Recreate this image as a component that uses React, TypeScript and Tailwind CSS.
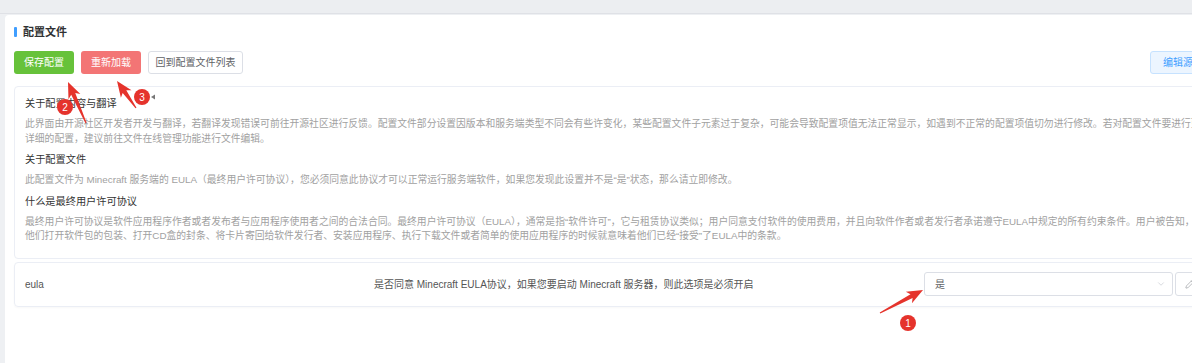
import React from 'react';
import { ChevronDown, Pencil } from 'lucide-react';

const font = { fontFamily: '"Liberation Sans", "Noto Sans CJK SC", sans-serif' };

// tapered annotation arrow, tail -> tip
const arrowPoints = (tx: number, ty: number, px: number, py: number) => {
  const len = Math.hypot(px - tx, py - ty);
  const dx = (px - tx) / len;
  const dy = (py - ty) / len;
  const nx = -dy;
  const ny = dx;
  const bx = px - dx * 13;
  const by = py - dy * 13;
  const wx = px - dx * 16;
  const wy = py - dy * 16;
  const pts = [
    [tx + nx * 0.6, ty + ny * 0.6],
    [bx + nx * 2.2, by + ny * 2.2],
    [wx + nx * 6.5, wy + ny * 6.5],
    [px, py],
    [wx - nx * 6.5, wy - ny * 6.5],
    [bx - nx * 2.2, by - ny * 2.2],
    [tx - nx * 0.6, ty - ny * 0.6],
  ];
  return pts.map(p => p.join(',')).join(' ');
};

const Badge: React.FC<{ x: number; y: number; n: string }> = ({ x, y, n }) => (
  <g>
    <circle cx={x} cy={y} r={8} fill="#e5332c" />
    <text x={x} y={y + 3.5} textAnchor="middle" fontSize="10" fill="#fff" fontFamily="Liberation Sans, sans-serif">
      {n}
    </text>
  </g>
);

const Heading: React.FC<{ children: React.ReactNode; className?: string }> = ({ children, className }) => (
  <div className={`text-[10.2px] leading-[14px] text-[#333] mb-[6px] ${className ?? ''}`}>{children}</div>
);

const Para: React.FC<{ lines: string[]; className?: string }> = ({ lines, className }) => (
  <div className={`text-[9.8px] leading-[14.5px] text-[#a1a1a1] ${className ?? ''}`}>
    {lines.map((l, i) => (
      <div key={i} className="whitespace-nowrap">{l}</div>
    ))}
  </div>
);

export default function App() {
  return (
    <div className="relative w-[1192px] h-[363px] overflow-hidden bg-[#eef0f3]" style={font}>
      <div className="h-[14px] bg-[#eceef1] border-b border-[#dfe1e6]" />
      <div className="ml-[5px] mt-[1px] w-[1240px] h-[400px] bg-white rounded-tl-[4px] pl-[9px] pt-[11px]">
        {/* title */}
        <div className="flex items-center h-[12px]">
          <div className="w-[3px] h-[10px] rounded-[1px] bg-[#409eff]" />
          <div className="ml-[6px] text-[11px] font-bold text-[#303133] leading-[12px]">配置文件</div>
        </div>

        {/* toolbar */}
        <div className="mt-[13px] flex items-center w-[1206px]">
          <button className="h-[23px] w-[60px] rounded-[3px] bg-[#67c23a] text-white text-[10px]">保存配置</button>
          <button className="ml-[7px] h-[23px] w-[60px] rounded-[3px] bg-[#f37575] text-white text-[10px]">重新加载</button>
          <button className="ml-[7px] h-[23px] w-[95px] rounded-[3px] bg-white border border-[#dcdfe6] text-[#606266] text-[10px]">
            回到配置文件列表
          </button>
          <div className="flex-1" />
          <button className="h-[23px] w-[70px] rounded-[3px] bg-[#ecf5ff] border border-[#c6e2ff] text-[#409eff] text-[10px] text-left pl-[12px]">
            编辑源文件
          </button>
        </div>

        {/* info box */}
        <div className="mt-[12px] border border-[#ebeef5] rounded-[4px] pl-[10px] pt-[10px] pb-[14px]">
          <Heading>关于配置内容与翻译</Heading>
          <Para
            className="mb-[7px]"
            lines={[
              '此界面由开源社区开发者开发与翻译，若翻译发现错误可前往开源社区进行反馈。配置文件部分设置因版本和服务端类型不同会有些许变化，某些配置文件子元素过于复杂，可能会导致配置项值无法正常显示，如遇到不正常的配置项值切勿进行修改。若对配置文件要进行更为',
              '详细的配置，建议前往文件在线管理功能进行文件编辑。',
            ]}
          />
          <Heading>关于配置文件</Heading>
          <Para
            className="mb-[7px]"
            lines={['此配置文件为 Minecraft 服务端的 EULA（最终用户许可协议），您必须同意此协议才可以正常运行服务端软件，如果您发现此设置并不是“是”状态，那么请立即修改。']}
          />
          <Heading>什么是最终用户许可协议</Heading>
          <Para
            lines={[
              '最终用户许可协议是软件应用程序作者或者发布者与应用程序使用者之间的合法合同。最终用户许可协议（EULA），通常是指“软件许可”，它与租赁协议类似；用户同意支付软件的使用费用，并且向软件作者或者发行者承诺遵守EULA中规定的所有约束条件。用户被告知，当',
              '他们打开软件包的包装、打开CD盒的封条、将卡片寄回给软件发行者、安装应用程序、执行下载文件或者简单的使用应用程序的时候就意味着他们已经“接受”了EULA中的条款。',
            ]}
          />
        </div>

        {/* eula row */}
        <div className="mt-[3px] h-[45px] border border-[#ebeef5] rounded-[4px] flex items-center pl-[10px] shadow-[0_1px_2px_rgba(0,0,0,0.03)]">
          <div className="w-[349px] text-[10px] text-[#555]">eula</div>
          <div className="w-[550px] text-[10px] text-[#555] whitespace-nowrap">
            是否同意 Minecraft EULA协议，如果您要启动 Minecraft 服务器，则此选项是必须开启
          </div>
          <div className="w-[249px] h-[24px] border border-[#dcdfe6] rounded-[3px] flex items-center pl-[10px] pr-[6px]">
            <span className="text-[10px] text-[#606266] flex-1">是</span>
            <ChevronDown className="w-[10px] h-[10px] text-[#c0c4cc]" strokeWidth={1.5} />
          </div>
          <div className="ml-[2px] w-[40px] h-[24px] border border-[#dcdfe6] rounded-[3px] flex items-center pl-[9px]">
            <Pencil className="w-[10px] h-[10px] text-[#909399]" strokeWidth={1.5} />
          </div>
        </div>
      </div>

      {/* annotations */}
      <svg className="absolute left-0 top-0 pointer-events-none" width={1192} height={363}>
        <polygon points={arrowPoints(86, 123, 68, 82)} fill="#e5332c" />
        <polygon points={arrowPoints(136, 108, 117, 81)} fill="#e5332c" />
        <polygon points={arrowPoints(880, 313, 923, 290)} fill="#e5332c" />
        <Badge x={65} y={107} n="2" />
        <Badge x={142} y={97} n="3" />
        <polygon points="151,97 155,94.5 155,99.5" fill="#777" />
        <Badge x={908} y={323} n="1" />
      </svg>
    </div>
  );
}
